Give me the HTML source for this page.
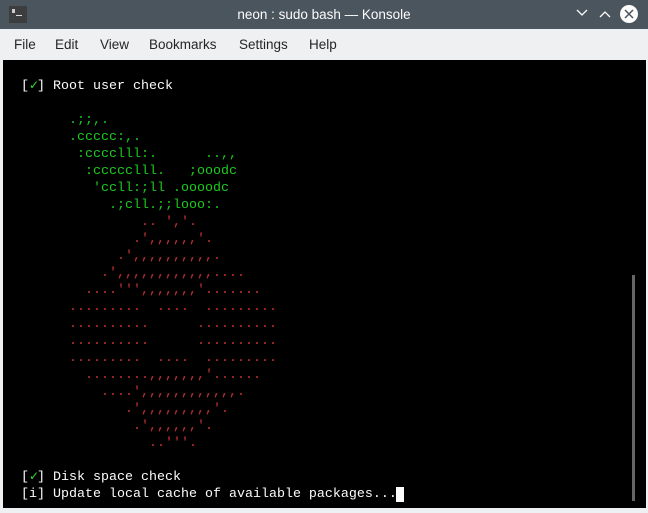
<!DOCTYPE html>
<html><head><meta charset="utf-8"><style>
*{margin:0;padding:0;box-sizing:border-box}
body{width:648px;height:513px;background:#eff0f1;position:relative;overflow:hidden;font-family:"Liberation Sans",sans-serif}
#title{position:absolute;left:0;top:0;width:648px;height:29px;background:#4b555e;color:#fcfcfc;font-size:13.5px;text-align:center;line-height:29px}
#icon{position:absolute;left:9px;top:6px;width:18px;height:17px;background:#3b3d3f;border-radius:1px}
#menu{position:absolute;top:29px;left:0;width:648px;height:31px;font-size:13.5px;color:#232627}
#menu span{position:absolute;top:8px}
#term{position:absolute;left:3px;top:60px;width:643px;height:448px;background:#000}
pre{position:absolute;left:18px;top:18px;font-family:"Liberation Mono",monospace;font-size:13.33px;line-height:17px;color:#fcfcfc}
.g{color:#1ccb1c}.r{color:#c83232}
.ck{display:inline-block;width:8px;overflow:visible;color:#2ee02e;font-weight:bold;font-family:"DejaVu Sans",sans-serif;font-size:12px;line-height:10px}
#sb{position:absolute;left:629px;top:215px;width:3px;height:226px;background:#666}
#cur{position:absolute;left:393px;top:427px;width:8px;height:15px;background:#fcfcfc}
</style></head><body>
<div id="title">neon : sudo bash — Konsole
<div id="icon"><div style="position:absolute;left:3px;top:3px;width:3px;height:4px;background:#ccc"></div><div style="position:absolute;left:7px;top:9px;width:6px;height:1px;background:#ddd"></div></div>
<svg style="position:absolute;left:0;top:0" width="648" height="29"><path d="M577 10l5 5 5-5" stroke="#fcfcfc" stroke-width="1.3" fill="none"/><path d="M600 17l5-5 5 5" stroke="#fcfcfc" stroke-width="1.3" fill="none"/><circle cx="629" cy="14" r="9" fill="#fcfcfc"/><path d="M625 10l8 8M633 10l-8 8" stroke="#4b555e" stroke-width="1.5"/></svg>
</div>
<div id="menu"><span style="left:14px">File</span><span style="left:55px">Edit</span><span style="left:100px">View</span><span style="left:149px">Bookmarks</span><span style="left:239px">Settings</span><span style="left:309px">Help</span></div>
<div id="term">
<pre>[<span class="ck">✓</span>] Root user check

<span class="g">      .;;,.
      .ccccc:,.
       :cccclll:.      ..,,
        :ccccclll.   ;ooodc
         'ccll:;ll .oooodc
           .;cll.;;looo:.</span><span class="r">
               .. ','.
              .',,,,,,'.
            .',,,,,,,,,,.
          .',,,,,,,,,,,,....
        ....''',,,,,,,'.......
      .........  ....  .........
      ..........      ..........
      ..........      ..........
      .........  ....  .........
        ........,,,,,,,'......
          ....',,,,,,,,,,,,.
             .',,,,,,,,,'.
              .',,,,,,'.
                ..'''.</span>

[<span class="ck">✓</span>] Disk space check
[i] Update local cache of available packages...</pre>
<div id="cur"></div>
<div id="sb"></div>
</div>
</body></html>
